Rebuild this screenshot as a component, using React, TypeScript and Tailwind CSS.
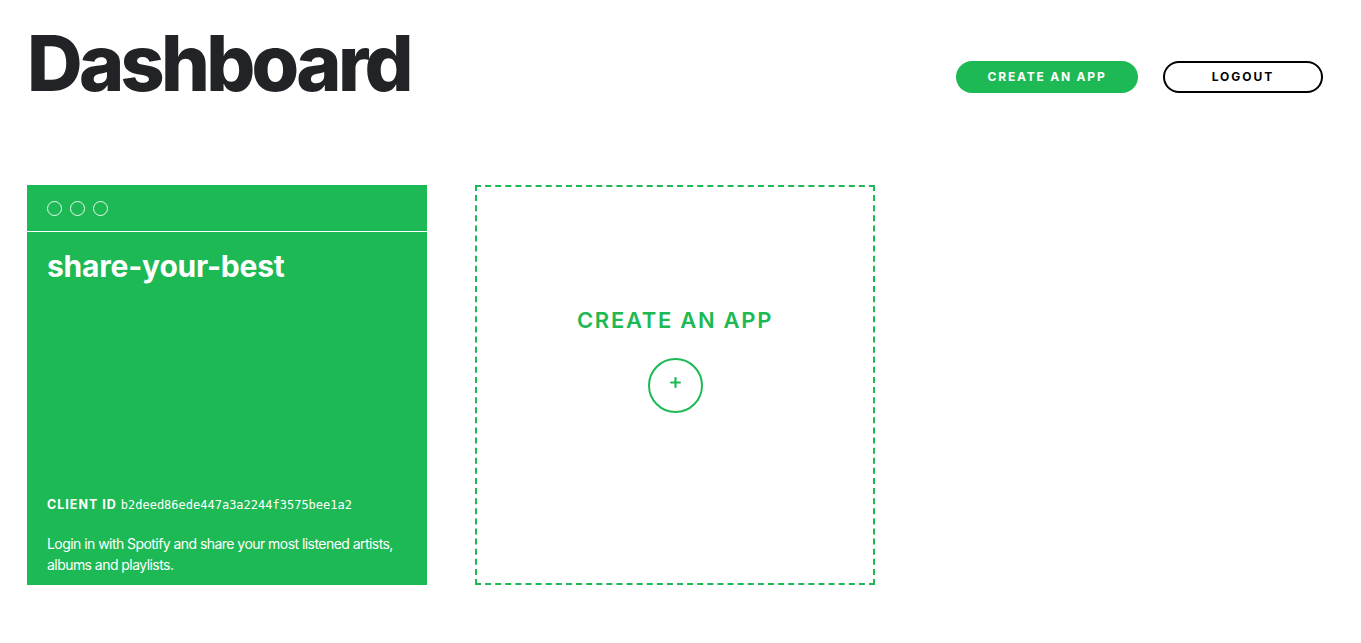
import { Plus } from 'lucide-react'

const font = { fontFamily: 'Inter, "Noto Sans", sans-serif' }

function AppCard() {
  return (
    <div className="flex h-[400px] w-[400px] flex-col bg-[#1db954] text-white">
      <div className="flex h-[47px] items-center gap-2 border-b border-white px-5 pt-[1px]">
        <span className="h-[15px] w-[15px] rounded-full border border-white/90" />
        <span className="h-[15px] w-[15px] rounded-full border border-white/90" />
        <span className="h-[15px] w-[15px] rounded-full border border-white/90" />
      </div>
      <div className="flex flex-1 flex-col pl-5 pr-2 pt-[14px] pb-[10px]">
        <h2 className="text-[30px] font-bold leading-[40px] tracking-[-0.2px]">share-your-best</h2>
        <div className="mt-auto">
          <p className="text-[12.5px] font-bold uppercase tracking-[1px]">
            Client ID{' '}
            <span className="font-['DejaVu_Sans_Mono',monospace] text-[12px] font-normal normal-case tracking-normal">
              b2deed86ede447a3a2244f3575bee1a2
            </span>
          </p>
          <p className="mt-[18px] text-[14px] leading-[21px] tracking-[-0.55px]">
            Login in with Spotify and share your most listened artists, albums and playlists.
          </p>
        </div>
      </div>
    </div>
  )
}

function CreateCard() {
  return (
    <div className="flex h-[400px] w-[400px] flex-col items-center border-2 border-dashed border-[#1db954] pt-[118px] text-[#1db954]">
      <p className="text-[22px] font-semibold uppercase leading-[30px] tracking-[1.7px]">Create an app</p>
      <div className="mt-[23px] flex h-[55px] w-[55px] items-center justify-center rounded-full border-2 border-[#1db954]">
        <Plus size={15} strokeWidth={3.5} className="-mt-[6px]" />
      </div>
    </div>
  )
}

export default function App() {
  return (
    <div className="min-h-screen bg-white px-[27px]" style={font}>
      <header className="flex items-start justify-between pr-[11px] pt-[18px]">
        <h1 className="text-[77px] font-extrabold leading-[90px] tracking-[-3.7px] text-[#222326]">Dashboard</h1>
        <div className="mt-[43px] flex items-center gap-[25px]">
          <button className="h-[32px] w-[182px] rounded-full bg-[#1db954] text-[12px] font-bold uppercase tracking-[1.8px] text-white">
            Create an app
          </button>
          <button className="h-[32px] w-[160px] rounded-full border-2 border-black text-[12px] font-bold uppercase tracking-[2px] text-black">
            Logout
          </button>
        </div>
      </header>
      <main className="mt-[77px] flex gap-[48px]">
        <AppCard />
        <CreateCard />
      </main>
    </div>
  )
}
